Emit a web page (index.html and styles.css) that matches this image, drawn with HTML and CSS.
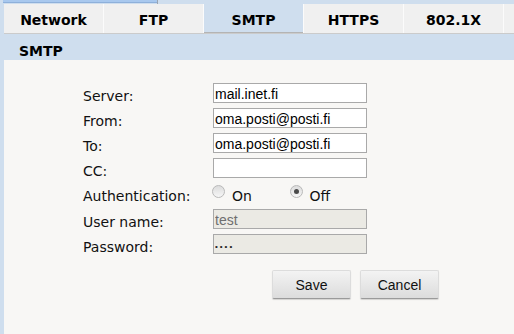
FILE: index.html
```html
<!DOCTYPE html>
<html>
<head>
<meta charset="utf-8">
<link rel="stylesheet" href="styles.css">
</head>
<body>
<div class="topstrip"><div class="topbar"></div><div class="topsep"></div></div>
<div class="main">
  <div class="tabs">
    <div class="tab">Network</div>
    <div class="tab">FTP</div>
    <div class="tab active">SMTP</div>
    <div class="tab">HTTPS</div>
    <div class="tab">802.1X</div>
    <div class="tabfill"></div>
  </div>
  <div class="section-head">SMTP</div>
  <div class="content">
    <div class="form">
      <label class="lbl">Server:</label>
      <input class="field" type="text" value="mail.inet.fi">
      <label class="lbl">From:</label>
      <input class="field" type="text" value="oma.posti@posti.fi">
      <label class="lbl">To:</label>
      <input class="field" type="text" value="oma.posti@posti.fi">
      <label class="lbl">CC:</label>
      <input class="field" type="text" value="">
      <label class="lbl">Authentication:</label>
      <div class="radios">
        <label class="opt"><input class="radio" type="radio" name="auth"><span>On</span></label>
        <label class="opt"><input class="radio" type="radio" name="auth" checked><span>Off</span></label>
      </div>
      <label class="lbl">User name:</label>
      <input class="field" type="text" value="test" disabled>
      <label class="lbl">Password:</label>
      <input class="field pw" type="password" value="test" disabled>
    </div>
    <div class="actions">
      <button class="btn">Save</button>
      <button class="btn">Cancel</button>
    </div>
  </div>
</div>
</body>
</html>
```
FILE: styles.css
```css
html, body {
  margin: 0;
  padding: 0;
  height: 100%;
}
body {
  background: #cfdeee;
  font-family: "DejaVu Sans", Verdana, sans-serif;
  font-size: 14px;
  color: #111;
  display: flex;
  flex-direction: column;
  overflow: hidden;
}
.topstrip {
  height: 4px;
  display: flex;
  flex: none;
}
.topbar {
  width: 154px;
  margin-left: 3px;
  height: 2px;
  background: #a8c8ee;
  border-bottom: 1px solid #8eb0da;
}
.topsep {
  width: 1px;
  height: 4px;
  background: #9aa5b3;
}
.main {
  margin-left: 4px;
  flex: 1;
  display: flex;
  flex-direction: column;
}
.tabs {
  display: flex;
  height: 29px;
  background: #f0f0f0;
  border-bottom: 1px solid #cbcbcb;
  flex: none;
}
.tab {
  width: 100px;
  border-right: 1px solid #fbfbfb;
  display: flex;
  align-items: center;
  justify-content: center;
  font-weight: bold;
  font-size: 14px;
  color: #000;
  padding-top: 3px;
  box-sizing: border-box;
}
.tab.active {
  background: #cfdeee;
  box-shadow: inset 0 -1px 0 #b4b4b4;
}
.tabfill {
  flex: 1;
}
.section-head {
  height: 18px;
  padding-top: 8px;
  background: #cfdeee;
  padding-left: 15px;
  font-weight: bold;
  font-size: 14px;
  line-height: 18px;
  color: #000;
  flex: none;
}
.content {
  flex: 1;
  background: #f8f7f5;
}
.form {
  display: grid;
  grid-template-columns: 130px 154px;
  grid-template-rows: 20px 20px 20px 20px 21px 20px 20px;
  row-gap: 5px;
  padding: 23px 0 0 79px;
}
.lbl {
  font-size: 14px;
  line-height: 20px;
  padding-top: 3px;
  color: #111;
  white-space: nowrap;
}
.field {
  box-sizing: border-box;
  width: 154px;
  height: 20px;
  margin: 0;
  border: 1px solid #a9a9a9;
  background: #fff;
  padding: 1px 1px 0;
  font-family: "Liberation Sans", Arial, sans-serif;
  font-size: 14px;
  color: #000;
  border-radius: 0;
  outline: none;
}
.field:disabled {
  background: #ebeae4;
  color: #6f6f6f;
}
.field.pw {
  font-size: 8px;
  letter-spacing: 2px;
  padding-top: 4px;
  color: #222;
}
.radios {
  display: flex;
  align-items: flex-start;
  margin-left: -1px;
}
.opt {
  display: flex;
  align-items: flex-start;
  width: 90px;
  font-size: 14px;
}
.opt span {
  margin-left: 7px;
  padding-top: 3px;
  line-height: 20px;
}
.radio {
  appearance: none;
  -webkit-appearance: none;
  width: 13px;
  height: 13px;
  margin: 2px 0 0 0;
  border: 1px solid #b9b9b9;
  border-radius: 50%;
  background: linear-gradient(#dcdcdc, #f6f6f6);
  box-sizing: border-box;
  position: relative;
}
.radio:checked::after {
  content: "";
  position: absolute;
  left: 3px;
  top: 3px;
  width: 5px;
  height: 5px;
  border-radius: 50%;
  background: #4a4a4a;
}
.actions {
  display: flex;
  gap: 9px;
  padding: 16px 0 0 268px;
}
.btn {
  width: 79px;
  height: 29px;
  box-sizing: border-box;
  font-family: "Liberation Sans", Arial, sans-serif;
  font-size: 14px;
  color: #111;
  background: linear-gradient(#f3f3f3, #dcdcdc);
  border: 1px solid #dcdcdc;
  border-bottom: 1px solid #9a9a9a;
  border-radius: 2px;
  box-shadow: 0 1px 1px rgba(0,0,0,0.15);
  padding: 0;
  margin: 0;
}
```
